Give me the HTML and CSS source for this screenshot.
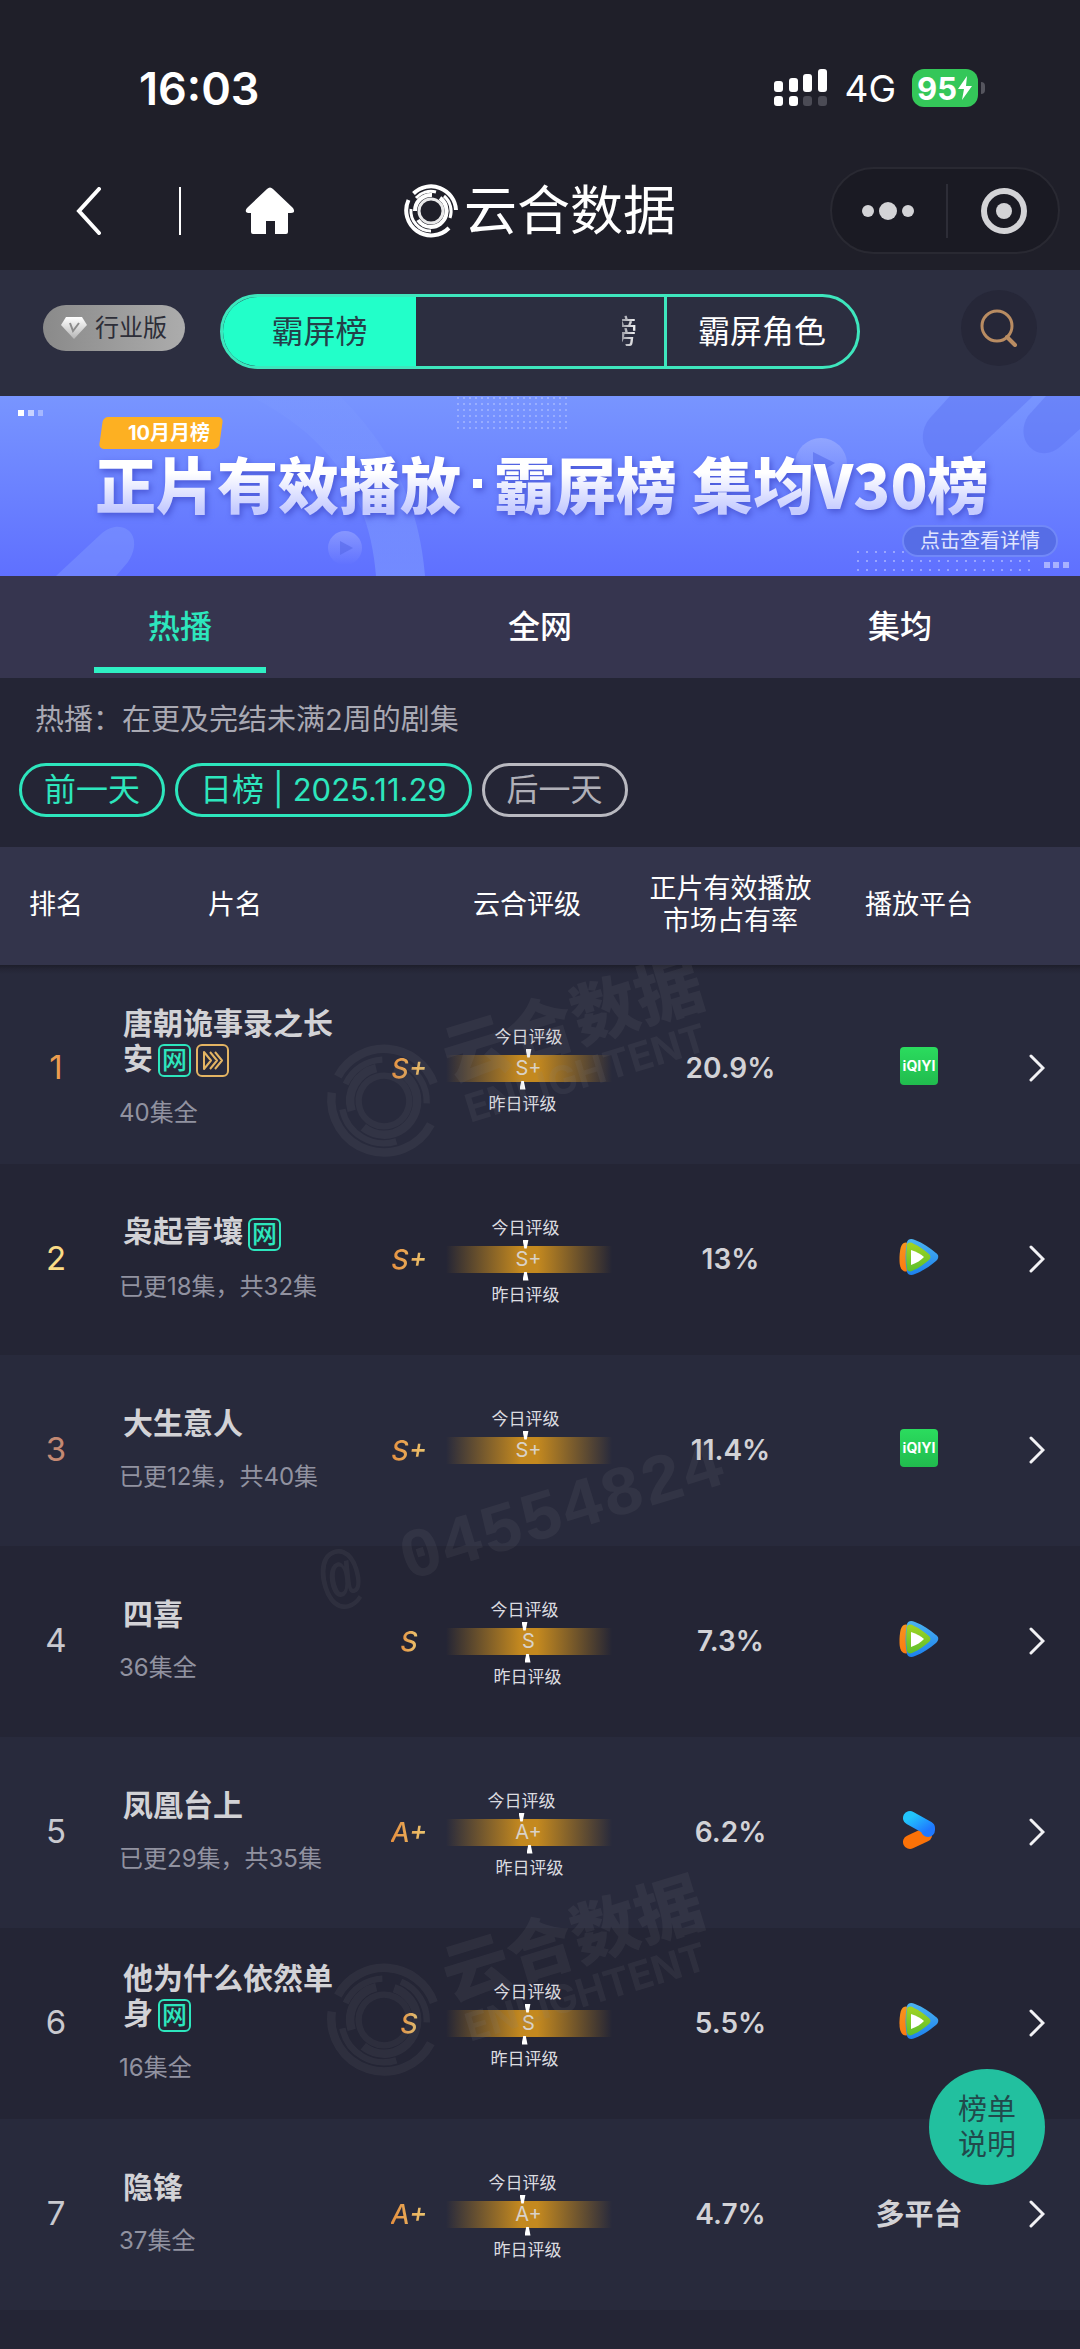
FILE: index.html
```html
<!DOCTYPE html>
<html lang="zh-CN">
<head>
<meta charset="utf-8">
<meta name="viewport" content="width=device-width, initial-scale=1">
<title>云合数据</title>
<link rel="stylesheet" href="styles.css">
</head>
<body>
<svg class="defs" width="0" height="0">
  <defs>
    <linearGradient id="g-blue" x1="0" y1="0" x2="0" y2="1"><stop offset="0" stop-color="#4cb4f0"/><stop offset="1" stop-color="#1c80ee"/></linearGradient>
    <linearGradient id="g-orange" x1="0" y1="0" x2="0" y2="1"><stop offset="0" stop-color="#f7951e"/><stop offset="1" stop-color="#fb7a10"/></linearGradient>
    <linearGradient id="g-lime" x1="0" y1="0" x2="0" y2="1"><stop offset="0" stop-color="#a4d420"/><stop offset="1" stop-color="#5cbf2c"/></linearGradient>
    <linearGradient id="g-sky" x1="0" y1="0" x2="1" y2="1"><stop offset="0" stop-color="#22c4fb"/><stop offset="1" stop-color="#1f78ff"/></linearGradient>
    <linearGradient id="g-gem" x1="0" y1="0" x2="0" y2="1"><stop offset="0" stop-color="#fff"/><stop offset="1" stop-color="#b5b5b5"/></linearGradient>
  </defs>
  <symbol id="rings" viewBox="0 0 54 54">
    <g fill="none" stroke="currentColor">
      <path stroke-width="4" d="M9.500 9.500A25 25 0 0 1 52 26M45 44A25 25 0 0 1 4.500 16"/>
      <path stroke-width="3" d="M12 14A20 20 0 0 1 32 8M40 12A20 20 0 0 1 46 34M27 47A20 20 0 0 1 7 25"/>
      <path stroke-width="4" d="M11 27A16 16 0 0 1 28 11M36 14A16 16 0 0 1 27 43A16 16 0 0 1 14 36"/>
      <circle cx="27" cy="27" r="12" stroke-width="3" opacity=".9"/>
    </g>
  </symbol>
  <symbol id="tencent" viewBox="0 0 40 38">
    <path fill="url(#g-orange)" d="M7 4.500C3 4.500 1 8 .5 19S3 33.500 7 33.500l7-1V6z"/>
    <path fill="url(#g-blue)" d="M8 4C9 1 12 0 16 2c8 3 15 8 21 13 3 2 3 5 0 8-6 5-13 10-21 13-4 2-7 1-8-2C6 24 6 14 8 4z"/>
    <path fill="url(#g-lime)" d="M8 7C9 4 12 4 15 6c5 2 10 6 15 10 2 2 2 4 0 6-5 4-10 8-15 10-3 2-6 2-7-1C7 23 7 15 8 7z"/>
    <path fill="#fff" d="M12 12c6 2 10 4 13 7-3 3-7 6-13 8z"/>
  </symbol>
  <symbol id="youku" viewBox="0 0 34 40">
    <path stroke="#fb7208" stroke-width="14" stroke-linecap="round" d="M8 32l15-7"/>
    <path stroke="url(#g-sky)" stroke-width="14" stroke-linecap="round" stroke-linejoin="round" fill="none" d="M8 8l18 10 0 2"/>
  </symbol>
  <symbol id="go" viewBox="0 0 16 28"><path d="M2 2l12 12L2 26" fill="none" stroke="#f2f2f5" stroke-width="3" stroke-linecap="round"/></symbol>
  <symbol id="forward" viewBox="0 0 29 29">
    <path d="M6 6v17l7-8.500zM12 6l7 8.500-7 8.500M17 6l7 8.500-7 8.500" fill="none" stroke="#e3b463" stroke-width="2" stroke-linejoin="round"/>
  </symbol>
</svg>

<header class="top">
  <div class="status">
    <span class="clock">16:03</span>
    <div class="status-right">
      <svg class="signal" viewBox="0 0 54 38">
        <g fill="#fff"><rect y="12" width="9" height="11" rx="3"/><rect x="15" y="9" width="9" height="14" rx="3"/><rect x="29" y="5" width="9" height="18" rx="3"/><rect x="44" width="9" height="23" rx="3"/><rect y="27" width="9" height="10" rx="3"/><rect x="15" y="27" width="9" height="10" rx="3"/></g>
        <g fill="#4b4b55"><rect x="29" y="27" width="9" height="10" rx="3"/><rect x="44" y="27" width="9" height="10" rx="3"/></g>
      </svg>
      <span class="network">4G</span>
      <span class="battery">95<svg viewBox="0 0 16 26"><path d="M10 1L1 14h6L5 25l10-14H9z" fill="#fff"/></svg></span>
    </div>
  </div>
  <nav class="nav">
    <div class="nav-left">
      <button class="icon-btn"><svg width="26" height="48" viewBox="0 0 26 48"><path d="M23 2L3 24l20 22" fill="none" stroke="#fff" stroke-width="4" stroke-linecap="round"/></svg></button>
      <i class="nav-line"></i>
      <button class="icon-btn"><svg width="50" height="48" viewBox="0 0 50 48"><path d="M22 2q3-3 6 0l20 19q3 5-2 5h-3v19q0 2-2 2H30V34h-9v13H8q-2 0-2-2V26H3q-4-1-1-5z" fill="#fff"/></svg></button>
    </div>
    <h1 class="brand"><svg class="brand-logo"><use href="#rings"/></svg>云合数据</h1>
    <div class="capsule">
      <button class="icon-btn"><svg width="52" height="20" viewBox="0 0 52 20"><g fill="#d3d3d6"><circle cx="6" cy="10" r="6"/><circle cx="26" cy="10" r="9"/><circle cx="46" cy="10" r="6"/></g></svg></button>
      <i class="capsule-line"></i>
      <button class="icon-btn"><svg width="48" height="48" viewBox="0 0 48 48"><circle cx="24" cy="24" r="20" fill="none" stroke="#d3d3d6" stroke-width="6"/><circle cx="24" cy="24" r="8" fill="#d3d3d6"/></svg></button>
    </div>
  </nav>
</header>

<main>
  <div class="toolbar">
    <button class="edition"><svg width="26" height="22" viewBox="0 0 26 22"><path d="M5 0h16l5 8-13 14L0 8z" fill="url(#g-gem)"/><path d="M9 6l3 8 6-8" fill="none" stroke="#8b8b8b" stroke-width="2"/></svg>行业版</button>
    <div class="segments">
      <button class="segment active">霸屏榜</button>
      <button class="segment"><span class="faded">榜</span></button>
      <button class="segment">霸屏角色</button>
    </div>
    <button class="search"><svg width="38" height="38" viewBox="0 0 38 38"><g fill="none" stroke="#b98c62" stroke-width="3" stroke-linecap="round"><circle cx="17" cy="17" r="15"/><path d="M27 28l8 8" stroke-width="4"/></g></svg></button>
  </div>

  <a class="banner" href="#">
    <svg class="banner-art" viewBox="0 0 1080 180" preserveAspectRatio="xMidYMid slice">
      <defs>
        <pattern id="dots-s" width="6" height="6" patternUnits="userSpaceOnUse"><rect x="1" y="1" width="2" height="2" fill="#fff" opacity=".25"/></pattern>
        <pattern id="dots-l" width="9" height="9" patternUnits="userSpaceOnUse"><rect x="2" y="2" width="2" height="2" fill="#fff" opacity=".35"/></pattern>
        <linearGradient id="fade" x1="0" y1="0" x2="0" y2="1"><stop offset="0" stop-color="#fff" stop-opacity=".22"/><stop offset="1" stop-color="#fff" stop-opacity="0"/></linearGradient>
        <linearGradient id="ribbon" x1="0" y1="0" x2="0" y2="1"><stop offset="0" stop-color="#86a4ff" stop-opacity=".1"/><stop offset="1" stop-color="#86a4ff" stop-opacity=".5"/></linearGradient>
      </defs>
      <path d="M250 0h90c60 60 80 120 85 180h-49C370 100 330 40 250 0z" fill="url(#ribbon)"/>
      <path d="M56 180l45-42c20-18 45 0 27 28l-12 14z" fill="#86a0ff" opacity=".4"/>
      <path d="M950 0l-20 22c-20 24 5 60 38 40l65-62z" fill="#5b72f2" opacity=".45"/>
      <path d="M1046 0l-18 20c-15 24 10 50 33 30l19-17V0z" fill="#5b72f2" opacity=".45"/>
      <circle cx="821" cy="68" r="26" fill="url(#fade)"/><path d="M813 56l22 11-22 13z" fill="#5b70ee" opacity=".7"/>
      <circle cx="345" cy="152" r="17" fill="url(#fade)"/><path d="M340 145l13 7-13 7z" fill="#5568e8" opacity=".6"/>
      <rect x="453" width="118" height="33" fill="url(#dots-s)"/>
      <rect x="857" y="150" width="180" height="28" fill="url(#dots-l)"/>
      <g fill="#fff"><rect x="18" y="14" width="6" height="6"/><rect x="28" y="14" width="6" height="6" opacity=".6"/><rect x="38" y="14" width="5" height="6" opacity=".35"/></g>
      <g fill="#fff" opacity=".45"><rect x="1044" y="166" width="6" height="6"/><rect x="1053" y="166" width="6" height="6"/><rect x="1063" y="166" width="6" height="6"/></g>
    </svg>
    <span class="banner-tag">10月月榜</span>
    <span class="banner-title"><span>正片有效播放</span><i class="banner-dot"></i><span>霸屏榜</span> <span>集均V30榜</span></span>
    <span class="banner-more">点击查看详情</span>
  </a>

  <div class="tabs">
    <button class="tab active">热播</button>
    <button class="tab">全网</button>
    <button class="tab">集均</button>
  </div>

  <section class="filter">
    <p class="filter-note">热播：在更及完结未满2周的剧集</p>
    <div class="pills">
      <button class="pill">前一天</button>
      <button class="pill">日榜 | <span class="date">2025.11.29</span></button>
      <button class="pill muted">后一天</button>
    </div>
  </section>

  <div class="board">
    <table class="rank">
      <colgroup><col class="c-rank"><col class="c-name"><col class="c-grade"><col class="c-gauge"><col class="c-share"><col class="c-platform"><col class="c-go"></colgroup>
      <thead>
        <tr><th>排名</th><th>片名</th><th></th><th>云合评级</th><th class="share">正片有效播放<br>市场占有率</th><th>播放平台</th><th></th></tr>
      </thead>
      <tbody>
        <tr>
          <td class="no first">1</td>
          <td class="name"><h2>唐朝诡事录之长安<span class="badge">网</span><svg class="badge gold"><use href="#forward"/></svg></h2><p>40集全</p></td>
          <td class="grade"><em>S+</em></td>
          <td class="gauge"><div class="bar"><span class="today" style="left:83px">今日评级</span>S+<span class="yesterday" style="left:77px">昨日评级</span></div></td>
          <td class="share">20.9%</td>
          <td class="platform"><span class="iqiyi">iQIYI</span></td>
          <td class="go"><svg width="16" height="28"><use href="#go"/></svg></td>
        </tr>
        <tr>
          <td class="no second">2</td>
          <td class="name"><h2>枭起青壤<span class="badge">网</span></h2><p>已更18集，共32集</p></td>
          <td class="grade"><em>S+</em></td>
          <td class="gauge"><div class="bar"><span class="today" style="left:80px">今日评级</span>S+<span class="yesterday" style="left:80px">昨日评级</span></div></td>
          <td class="share">13%</td>
          <td class="platform"><svg width="40" height="38"><use href="#tencent"/></svg></td>
          <td class="go"><svg width="16" height="28"><use href="#go"/></svg></td>
        </tr>
        <tr>
          <td class="no third">3</td>
          <td class="name"><h2>大生意人</h2><p>已更12集，共40集</p></td>
          <td class="grade"><em>S+</em></td>
          <td class="gauge"><div class="bar"><span class="today" style="left:80px">今日评级</span>S+</div></td>
          <td class="share">11.4%</td>
          <td class="platform"><span class="iqiyi">iQIYI</span></td>
          <td class="go"><svg width="16" height="28"><use href="#go"/></svg></td>
        </tr>
        <tr>
          <td class="no">4</td>
          <td class="name"><h2>四喜</h2><p>36集全</p></td>
          <td class="grade"><em>S</em></td>
          <td class="gauge"><div class="bar"><span class="today" style="left:79px">今日评级</span>S<span class="yesterday" style="left:82px">昨日评级</span></div></td>
          <td class="share">7.3%</td>
          <td class="platform"><svg width="40" height="38"><use href="#tencent"/></svg></td>
          <td class="go"><svg width="16" height="28"><use href="#go"/></svg></td>
        </tr>
        <tr>
          <td class="no">5</td>
          <td class="name"><h2>凤凰台上</h2><p>已更29集，共35集</p></td>
          <td class="grade"><em>A+</em></td>
          <td class="gauge"><div class="bar"><span class="today" style="left:76px">今日评级</span>A+<span class="yesterday" style="left:84px">昨日评级</span></div></td>
          <td class="share">6.2%</td>
          <td class="platform"><svg width="34" height="40"><use href="#youku"/></svg></td>
          <td class="go"><svg width="16" height="28"><use href="#go"/></svg></td>
        </tr>
        <tr>
          <td class="no">6</td>
          <td class="name"><h2>他为什么依然单身<span class="badge">网</span></h2><p>16集全</p></td>
          <td class="grade"><em>S</em></td>
          <td class="gauge"><div class="bar"><span class="today" style="left:82px">今日评级</span>S<span class="yesterday" style="left:79px">昨日评级</span></div></td>
          <td class="share">5.5%</td>
          <td class="platform"><svg width="40" height="38"><use href="#tencent"/></svg></td>
          <td class="go"><svg width="16" height="28"><use href="#go"/></svg></td>
        </tr>
        <tr>
          <td class="no">7</td>
          <td class="name"><h2>隐锋</h2><p>37集全</p></td>
          <td class="grade"><em>A+</em></td>
          <td class="gauge"><div class="bar"><span class="today" style="left:77px">今日评级</span>A+<span class="yesterday" style="left:82px">昨日评级</span></div></td>
          <td class="share">4.7%</td>
          <td class="platform">多平台</td>
          <td class="go"><svg width="16" height="28"><use href="#go"/></svg></td>
        </tr>
      </tbody>
    </table>
    <svg class="watermark" viewBox="0 0 1080 1344">
      <g id="mark" transform="translate(384 136) rotate(-17)">
        <use href="#rings" x="-57" y="-57" width="114" height="114"/>
        <text x="70" y="2" class="mark-name">云合数据</text>
        <text x="76" y="46" class="mark-latin">ENLIGHTENT</text>
      </g>
      <text class="mark-id" transform="translate(327 640) rotate(-17)">@ 04554824</text>
      <use href="#mark" y="919"/>
    </svg>
  </div>
</main>

<button class="fab">榜单<br>说明</button>
</body>
</html>
```

FILE: styles.css
```css
* { box-sizing: border-box; }

body {
  margin: 0;
  min-height: 100vh;
  background: #242535;
  color: #fff;
  font-family: Inter, "Noto Sans CJK SC", sans-serif;
}

button {
  margin: 0;
  padding: 0;
  border: 0;
  background: none;
  color: inherit;
  font: inherit;
}

svg { display: block; }
.defs { position: absolute; }
h1, h2, p { margin: 0; }

/* status bar and navigation */
.top {
  height: 270px;
  padding-top: 60px;
  background: #1f1f29;
}

.status {
  display: flex;
  align-items: center;
  justify-content: space-between;
  height: 56px;
  padding: 0 102px 0 139px;
}

.clock { font-size: 45px; font-weight: 600; }
.status-right { display: flex; align-items: center; }
.signal { width: 54px; height: 38px; }
.network { margin: 0 16px 0 16px; font-size: 37px; }

.battery {
  position: relative;
  display: flex;
  align-items: center;
  justify-content: center;
  width: 66px;
  height: 38px;
  border-radius: 12px;
  background: #34c759;
  font-size: 31px;
  font-weight: 700;
}
.battery svg { width: 16px; height: 26px; }
.battery::after {
  content: "";
  position: absolute;
  right: -7px;
  width: 4px;
  height: 12px;
  border-radius: 0 4px 4px 0;
  background: #55555e;
}

.nav {
  display: grid;
  grid-template-columns: 1fr auto 1fr;
  align-items: center;
  margin-top: 51px;
  padding: 0 20px;
}
.nav-left { display: flex; align-items: center; padding-left: 56px; }
.nav-line { width: 2px; height: 48px; margin: 0 64px 0 77px; background: #fff; }
.nav .capsule { justify-self: end; }

.brand {
  display: flex;
  align-items: center;
  gap: 6px;
  font-size: 53px;
  font-weight: 400;
  line-height: 64px;
}
.brand-logo { width: 54px; height: 54px; }

.capsule {
  display: flex;
  align-items: center;
  justify-content: center;
  gap: 32px;
  width: 230px;
  height: 87px;
  border: 2px solid #292932;
  border-radius: 44px;
  background: #1a1a23;
}
.capsule-line { width: 2px; height: 54px; background: #2d2d37; }

/* board switch */
.toolbar {
  display: flex;
  align-items: center;
  height: 126px;
  padding: 0 43px 10px;
  background: #2c2e40;
}

.edition {
  display: flex;
  align-items: center;
  justify-content: center;
  gap: 8px;
  width: 142px;
  height: 46px;
  border-radius: 23px;
  background: linear-gradient(90deg, #8a8a8a, #acacac);
  color: #2d2e38;
  font-size: 24px;
  line-height: 44px;
}

.segments {
  display: flex;
  height: 75px;
  margin: 6px auto 0 35px;
  border: 3px solid #3ee6bd;
  border-radius: 38px;
  overflow: hidden;
}
.segment { padding: 0 31px 4px; font-size: 32px; }
.segment + .segment { border-left: 3px solid #3ee6bd; }
.segment.active { width: 193px; background: #22ffc9; color: #24404a; }
.segment:nth-child(2) { width: 248px; border-left: 0; }

/* only the tail of the label shows through */
.faded {
  display: flex;
  justify-content: flex-end;
  width: 15px;
  margin-left: auto;
  margin-right: -4px;
  overflow: hidden;
  -webkit-mask-image: linear-gradient(90deg, #0008, #000);
  mask-image: linear-gradient(90deg, #0008, #000);
}

.search {
  display: flex;
  align-items: center;
  justify-content: center;
  width: 76px;
  height: 76px;
  border-radius: 50%;
  background: #262738;
}

/* promotion banner */
.banner {
  position: relative;
  display: flex;
  flex-direction: column;
  align-items: flex-start;
  padding: 21px 22px 19px 95px;
  background: linear-gradient(180deg, #7895ff, #5f70ff);
  color: #fff;
  text-decoration: none;
  overflow: hidden;
}
.banner-art { position: absolute; inset: 0; width: 100%; height: 100%; }

.banner-tag {
  position: relative;
  z-index: 0;
  margin-left: 4px;
  padding: 0 12px 0 29px;
  font-size: 20px;
  font-weight: 700;
  line-height: 32px;
}
.banner-tag::before {
  content: "";
  position: absolute;
  inset: 0 1px 0 2px;
  z-index: -1;
  border-radius: 5px;
  background: #fdb022;
  transform: skewX(-8deg);
}

.banner-title {
  position: relative;
  display: flex;
  align-items: center;
  margin-bottom: 8px;
  font-family: "Noto Sans CJK SC", sans-serif;
  font-size: 61px;
  font-weight: 900;
  line-height: 68px;
  white-space: nowrap;
  filter: drop-shadow(2px 3px 3px #4a58d8);
}
.banner-title span {
  background: linear-gradient(180deg, #fff 35%, #c5cbff 90%);
  -webkit-background-clip: text;
  background-clip: text;
  color: transparent;
}
.banner-title span:last-child { margin-left: 15px; }
.banner-dot { width: 9px; height: 9px; margin: 0 12px; background: #fff; }

.banner-more {
  position: relative;
  align-self: flex-end;
  padding: 0 16px;
  border: 2px solid #7188f8;
  border-radius: 16px;
  background: #566de6;
  color: #e0e5ff;
  font-size: 20px;
  line-height: 28px;
}

/* tabs */
.tabs { display: flex; background: #36354f; }
.tab {
  flex: 1;
  height: 102px;
  padding-bottom: 6px;
  font-size: 32px;
  font-weight: 500;
}
.tab.active {
  background: linear-gradient(#2ff0c4, #2ff0c4) center bottom 5px / 172px 6px no-repeat;
  color: #2de6bd;
}

/* date filter */
.filter { padding: 20px 19px 30px; }
.filter-note {
  padding-left: 16px;
  color: #a9a9b3;
  font-size: 29px;
  line-height: 44px;
}
.pills { display: flex; gap: 10px; margin-top: 21px; }
.pill {
  height: 54px;
  padding: 0 22px;
  border: 3px solid #2de6bd;
  border-radius: 27px;
  color: #2de6bd;
  font-size: 32px;
  line-height: 44px;
}
.date { font-size: 31px; }
.pill.muted { border-color: #b9b9c0; color: #b0b0b8; }

/* ranking */
.board { position: relative; }
.rank { width: 100%; border-collapse: collapse; table-layout: fixed; }
.c-rank { width: 112px; }
.c-grade { width: 74px; }
.c-gauge { width: 190px; }
.c-share { width: 208px; }
.c-platform { width: 178px; }
.c-go { width: 72px; }

.rank thead tr { height: 118px; background: #33344b; }
.rank th {
  padding: 0 0 2px;
  font-size: 27px;
  font-weight: 400;
  line-height: 32px;
  white-space: nowrap;
}
.rank td { height: 191px; padding: 0 0 1px; text-align: center; }
.rank tbody tr:nth-child(odd) { background: #282a3c; }
.rank tbody tr:first-child td {
  height: 199px;
  padding-top: 8px;
  background: linear-gradient(180deg, #1d1e2a, #242535 4px, #282a3c 9px);
}

.rank .no { padding-bottom: 3px; color: #c9c9cf; font-size: 33px; }
.rank .first { color: #eb9d4f; }
.rank .second { color: #fadb86; }
.rank .third { color: #c48973; }

.rank .name { padding-left: 7px; text-align: left; }
.name h2 {
  width: 220px;
  padding-left: 4px;
  color: #d2d2d6;
  font-size: 30px;
  font-weight: 600;
  line-height: 35px;
}
.name p {
  margin-top: 18px;
  color: #9192a0;
  font-size: 24px;
  line-height: 35px;
}

.badge {
  display: inline-block;
  width: 33px;
  height: 33px;
  margin-left: 5px;
  border: 2px solid #2de6bd;
  border-radius: 6px;
  color: #2de6bd;
  font-size: 25px;
  font-weight: 500;
  line-height: 28px;
  text-align: center;
  vertical-align: middle;
}
.badge.gold { border-color: #e3b463; }

.rank .grade { padding-left: 28px; }
.grade em {
  background: linear-gradient(90deg, #e58f3f, #ecc670);
  -webkit-background-clip: text;
  background-clip: text;
  color: transparent;
  font-size: 27px;
  font-weight: 500;
}

.rank .gauge { padding-left: 3px; }
.bar {
  position: relative;
  width: 166px;
  height: 27px;
  margin: 0 auto;
  background: linear-gradient(90deg, #c4891f00, #c4891f 45%, #c4891f 55%, #c4891f00);
  color: #d9d2c8;
  font-size: 20px;
  line-height: 26px;
}
.today, .yesterday {
  position: absolute;
  display: flex;
  flex-direction: column;
  align-items: center;
  color: #dcdce0;
  font-size: 17px;
  line-height: 24px;
  white-space: nowrap;
  transform: translateX(-50%);
}
.today { bottom: 24px; }
.yesterday { top: 26px; line-height: 28px; }
.today::after, .yesterday::before {
  content: "";
  width: 6px;
  height: 9px;
  background: #fff;
}
.today::after { clip-path: polygon(0 0, 100% 0, 70% 100%, 30% 100%); }
.yesterday::before { clip-path: polygon(30% 0, 70% 0, 100% 100%, 0 100%); }

.rank .share { padding-left: 9px; }
.rank td.share, .rank .platform { color: #d2d2d6; font-size: 28px; font-weight: 600; }
.rank .platform { padding-bottom: 5px; font-size: 29px; }
.platform svg { margin: 0 auto; }
.iqiyi {
  display: block;
  width: 38px;
  height: 38px;
  margin: 0 auto;
  border-radius: 4px;
  background: linear-gradient(180deg, #2bdc5e, #21bb4e);
  color: #fff;
  font-size: 14px;
  font-weight: 700;
  line-height: 38px;
}
.rank .go { padding-right: 14px; }
.go svg { margin: 0 auto; }

.watermark {
  position: absolute;
  top: 118px;
  left: 0;
  width: 100%;
  color: #85858c;
  fill: #85858c;
  opacity: 0.11;
  overflow: hidden;
  pointer-events: none;
}
.mark-name { font-size: 67px; font-weight: 900; }
.mark-latin { font-size: 39px; font-weight: 700; }
.mark-id { font-family: "Liberation Mono", monospace; font-size: 70px; font-weight: 700; }

.fab {
  position: fixed;
  right: 35px;
  bottom: 164px;
  width: 116px;
  height: 116px;
  border-radius: 50%;
  background: #22c09f;
  color: #214a4c;
  font-size: 29px;
  line-height: 35px;
}
```
